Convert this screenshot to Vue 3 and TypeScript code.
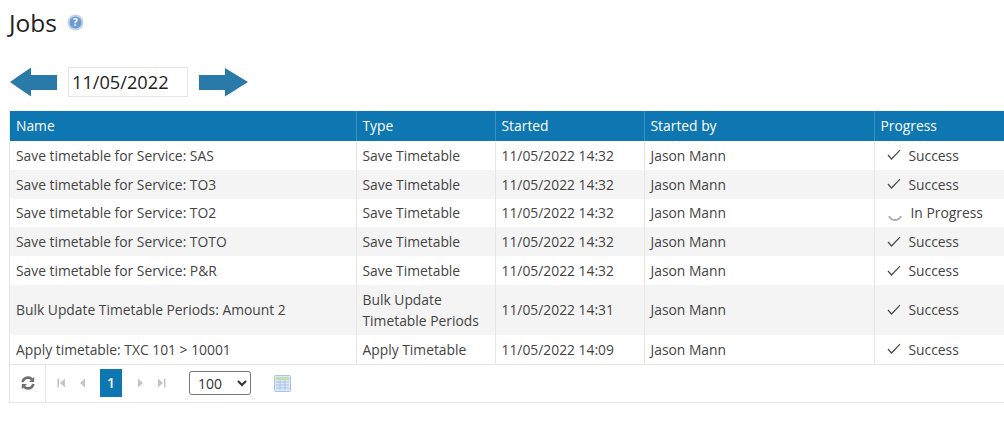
<template>
  <div class="page">
    <div class="title-row">
      <h1>Jobs</h1>
      <span class="help-icon">
        <svg width="17" height="17" viewBox="0 0 17 17">
          <circle cx="8.5" cy="8.5" r="8" fill="#c3d4ea" />
          <circle cx="8.5" cy="8.5" r="6" fill="#6e9ad0" />
          <text x="8.5" y="12" text-anchor="middle" class="help-mark">?</text>
        </svg>
      </span>
    </div>

    <div class="date-row">
      <svg class="arrow" width="47" height="30" viewBox="0 0 47 30">
        <path d="M0 15 L21 0.5 V8 H47 V23 H21 V29.5 Z" fill="#2a7aa9" />
      </svg>
      <input class="date-input" type="text" value="11/05/2022" />
      <svg class="arrow" width="49" height="30" viewBox="0 0 49 30">
        <path d="M49 15 L26 1 V8 H0 V23 H26 V29.5 Z" fill="#2a7aa9" />
      </svg>
    </div>

    <div class="grid">
      <table>
        <colgroup>
          <col class="col-name" />
          <col class="col-type" />
          <col class="col-started" />
          <col class="col-by" />
          <col />
        </colgroup>
        <thead>
          <tr>
            <th>Name</th>
            <th>Type</th>
            <th>Started</th>
            <th>Started by</th>
            <th>Progress</th>
          </tr>
        </thead>
        <tbody>
          <tr v-for="(job, index) in jobs" :key="index" :class="{ alt: index % 2 === 1 }">
            <td>{{ job.name }}</td>
            <td :class="{ wrap: job.type.length > 20 }">{{ job.type }}</td>
            <td>{{ job.started }}</td>
            <td>{{ job.by }}</td>
            <td>
              <span v-if="job.done" class="status">
                <svg width="14" height="12" viewBox="0 0 14 12">
                  <path d="M1 6 L4.5 10 L13 1.2" fill="none" stroke="#4a4a4a" stroke-width="1.2" />
                </svg>
                Success
              </span>
              <span v-else class="status pending">
                <svg width="18" height="12" viewBox="0 0 18 12">
                  <path d="M2 5 A6.5 6.5 0 0 0 14 5" fill="none" stroke="#a8a8a8" stroke-width="1.8" />
                </svg>
                In Progress
              </span>
            </td>
          </tr>
        </tbody>
      </table>

      <div class="pager">
        <span class="refresh">
          <svg width="14" height="14" viewBox="0 0 14 14">
            <path d="M1.6 6 A5.5 5.5 0 0 1 11 3.4" fill="none" stroke="#707070" stroke-width="2.6" />
            <path d="M13.2 0.8 V6 H8 Z" fill="#707070" />
            <path d="M12.4 8 A5.5 5.5 0 0 1 3 10.6" fill="none" stroke="#707070" stroke-width="2.6" />
            <path d="M0.8 13.2 V8 H6 Z" fill="#707070" />
          </svg>
        </span>
        <div class="pages">
          <svg width="9" height="10" viewBox="0 0 9 10"><path d="M0.5 0.5 H2 V9.5 H0.5 Z M8 0.5 V9.5 L3 5 Z" fill="#c4c4c4" /></svg>
          <svg class="prev" width="7" height="10" viewBox="0 0 7 10"><path d="M6 0.5 V9.5 L1 5 Z" fill="#c4c4c4" /></svg>
          <span class="current">1</span>
          <svg class="next" width="7" height="10" viewBox="0 0 7 10"><path d="M1 0.5 V9.5 L6 5 Z" fill="#c4c4c4" /></svg>
          <svg class="last" width="9" height="10" viewBox="0 0 9 10"><path d="M1 0.5 V9.5 L6 5 Z M7 0.5 H8.5 V9.5 H7 Z" fill="#c4c4c4" /></svg>
        </div>
        <select class="page-size">
          <option>100</option>
        </select>
        <svg class="export" width="17" height="17" viewBox="0 0 17 17">
          <rect x="0.5" y="0.5" width="16" height="16" rx="1" fill="#dbe8f7" stroke="#a9c5e8" />
          <rect x="2" y="2" width="13" height="3" fill="#c4dfae" />
          <path d="M2 7 H15 M2 10 H15 M2 13 H15 M6 5 V15 M11 5 V15" stroke="#a9c5e8" stroke-width="1" fill="none" />
        </svg>
      </div>
    </div>
  </div>
</template>

<script setup lang="ts">
interface Job {
  name: string;
  type: string;
  started: string;
  by: string;
  done: boolean;
}

const jobs: Job[] = [
  { name: 'Save timetable for Service: SAS', type: 'Save Timetable', started: '11/05/2022 14:32', by: 'Jason Mann', done: true },
  { name: 'Save timetable for Service: TO3', type: 'Save Timetable', started: '11/05/2022 14:32', by: 'Jason Mann', done: true },
  { name: 'Save timetable for Service: TO2', type: 'Save Timetable', started: '11/05/2022 14:32', by: 'Jason Mann', done: false },
  { name: 'Save timetable for Service: TOTO', type: 'Save Timetable', started: '11/05/2022 14:32', by: 'Jason Mann', done: true },
  { name: 'Save timetable for Service: P&R', type: 'Save Timetable', started: '11/05/2022 14:32', by: 'Jason Mann', done: true },
  { name: 'Bulk Update Timetable Periods: Amount 2', type: 'Bulk Update Timetable Periods', started: '11/05/2022 14:31', by: 'Jason Mann', done: true },
  { name: 'Apply timetable: TXC 101 > 10001', type: 'Apply Timetable', started: '11/05/2022 14:09', by: 'Jason Mann', done: true }
];
</script>

<style>
html,
body {
  overflow: hidden;
  background: #fff;
}
</style>

<style scoped>
.page {
  width: 1040px;
  height: 421px;
  padding: 0 0 0 9px;
  box-sizing: border-box;
  font-family: "Open Sans", sans-serif;
  font-size: 13.85px;
  color: #444;
}

.title-row {
  display: flex;
  align-items: center;
  height: 44px;
}

.title-row h1 {
  margin: 0;
  font-size: 24.5px;
  font-weight: 400;
  color: #222;
}

.help-icon {
  display: flex;
  margin: 0 0 0 10px;
}

.help-mark {
  font-size: 10px;
  font-weight: 700;
  fill: #fff;
}

.date-row {
  display: flex;
  align-items: center;
  height: 30px;
  margin: 23px 0 14px 1px;
}

.arrow {
  flex-shrink: 0;
}

.date-input {
  width: 120px;
  height: 30px;
  margin: 0 11px;
  padding: 0 3px;
  box-sizing: border-box;
  border: 1px solid #e6e6e6;
  font-family: "Open Sans", sans-serif;
  font-size: 18.2px;
  color: #222;
  outline: none;
}

.grid {
  border: 1px solid #e6e6e6;
  border-top: 0;
}

table {
  width: 100%;
  border-collapse: collapse;
  table-layout: fixed;
}

.col-name {
  width: 346px;
}

.col-type {
  width: 139px;
}

.col-started {
  width: 149px;
}

.col-by {
  width: 230px;
}

th {
  height: 30px;
  padding: 0 6px 2px;
  box-sizing: border-box;
  background: #0e76b1;
  border-left: 1px solid #3b8fc0;
  color: #fff;
  font-size: 13.85px;
  font-weight: 400;
  text-align: left;
}

th:first-child,
td:first-child {
  border-left: 0;
}

td {
  height: 28.8px;
  padding: 0 6px;
  box-sizing: border-box;
  border-left: 1px solid #e6e6e6;
  white-space: nowrap;
}

td.wrap {
  height: 50px;
  white-space: normal;
  line-height: 21px;
}

tr.alt td {
  background: #f4f4f4;
}

.status {
  display: flex;
  align-items: center;
  gap: 8px;
  padding-left: 6px;
}

.status.pending {
  gap: 6px;
}

.status.pending svg {
  margin-top: 8px;
}

.pager {
  display: flex;
  align-items: center;
  height: 38px;
  border-top: 1px solid #e6e6e6;
  box-sizing: border-box;
}

.refresh {
  display: flex;
  align-items: center;
  justify-content: center;
  width: 36px;
  height: 100%;
  border-right: 1px solid #e6e6e6;
  box-sizing: border-box;
}

.pages {
  display: flex;
  align-items: center;
  margin-left: 11px;
}

.prev {
  margin-left: 13px;
}

.current {
  width: 22px;
  height: 28px;
  margin-left: 14px;
  background: #0e76b1;
  color: #fff;
  font-weight: 600;
  line-height: 28px;
  text-align: center;
}

.next {
  margin-left: 15px;
}

.last {
  margin-left: 13px;
}

.page-size {
  width: 62px;
  height: 24px;
  margin-left: 23px;
  padding-left: 4px;
  border: 1px solid #767676;
  border-radius: 3px;
  background: #fff;
  font-family: "Open Sans", sans-serif;
  font-size: 14px;
  color: #333;
}

.export {
  margin-left: 23px;
}
</style>
